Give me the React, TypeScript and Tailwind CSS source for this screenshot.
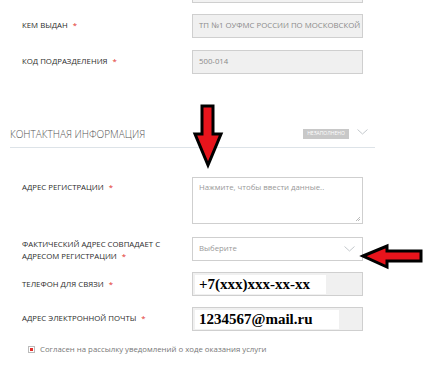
import React from "react";

const font = { fontFamily: '"Open Sans", "Noto Sans", sans-serif' };

function Label({ children }: { children: React.ReactNode }) {
  return (
    <div className="w-[170px] whitespace-nowrap pl-[22px] pr-2 text-[7.8px] uppercase leading-[12px] text-[#2b2b2b]">
      {children}
      <span className="ml-[5px] text-[#e2312d]">*</span>
    </div>
  );
}

function Arrows() {
  return (
    <svg className="pointer-events-none absolute left-0 top-0" width="426" height="381">
      <polygon
        points="202,106 213,106 213,134 221,134 208,165 195,134 202,134"
        fill="#e8141c"
        stroke="#000"
        strokeWidth="3"
        strokeLinejoin="miter"
      />
      <polygon
        points="363,256 387,246 387,251 421,251 421,261 387,261 387,267"
        fill="#e8141c"
        stroke="#000"
        strokeWidth="3"
        strokeLinejoin="miter"
      />
    </svg>
  );
}

function Chevron({ className }: { className?: string }) {
  return (
    <svg className={className} width="11" height="6" viewBox="0 0 11 6">
      <path d="M0.5 0.5 L5.5 5 L10.5 0.5" fill="none" stroke="#c4c8cc" strokeWidth="1" />
    </svg>
  );
}

export default function App() {
  return (
    <div className="relative h-[381px] w-[426px] overflow-hidden bg-white" style={font}>
      <div className="ml-[192px] h-[3px] w-[171px] border border-t-0 border-[#cfcfcf] bg-[#f2f2f2]" />

      <div className="mt-[11px] flex items-start">
        <div className="pt-[5px]">
          <Label>Кем выдан</Label>
        </div>
        <div className="ml-[22px] flex h-[24px] w-[171px] items-center overflow-hidden whitespace-nowrap border border-[#cfcfcf] bg-[#f0f0f0] pl-[6px] text-[7.8px] text-[#8a8a8a]">
          ТП №1 ОУФМС РОССИИ ПО МОСКОВСКОЙ
        </div>
      </div>

      <div className="mt-[12px] flex items-start">
        <div className="pt-[5px]">
          <Label>Код подразделения</Label>
        </div>
        <div className="ml-[22px] flex h-[24px] w-[171px] items-center border border-[#cfcfcf] bg-[#f0f0f0] pl-[6px] text-[7.8px] text-[#8a8a8a]">
          500-014
        </div>
      </div>

      <div className="ml-[10px] mt-[53px] w-[365px] border-b border-[#dde3e8] pb-[6px]">
        <div className="flex items-center">
          <div className="text-[10px] font-light uppercase leading-[14px] text-[#555]">
            Контактная информация
          </div>
          <div className="ml-auto mr-[26px] flex h-[10px] w-[46px] items-center justify-center bg-[#c8c8c8] text-[5px] uppercase text-white">
            незаполнено
          </div>
        </div>
      </div>
      <Chevron className="absolute left-[357px] top-[129px]" />

      <div className="mt-[29px] flex items-start">
        <div className="pt-[4px]">
          <Label>Адрес регистрации</Label>
        </div>
        <div className="relative ml-[22px] h-[47px] w-[171px] border border-[#cfcfcf] bg-white pl-[6px] pt-[4px] text-[7.8px] text-[#999]">
          Нажмите, чтобы ввести данные..
          <svg className="absolute bottom-[1px] right-[1px]" width="6" height="6">
            <path d="M5 1 L1 5 M5 3 L3 5" stroke="#aaa" strokeWidth="0.8" />
          </svg>
        </div>
      </div>

      <div className="mt-[13px] flex items-start">
        <div className="pt-[1px]">
          <Label>
            Фактический адрес совпадает с
            <br />
            адресом регистрации
          </Label>
        </div>
        <div className="ml-[22px] flex h-[24px] w-[171px] items-center border border-[#cfcfcf] bg-white pl-[6px] pr-[7px] text-[7.8px] text-[#999]">
          Выберите
          <Chevron className="ml-auto" />
        </div>
      </div>

      <div className="mt-[10px] flex items-start">
        <div className="pt-[6px]">
          <Label>Телефон для связи</Label>
        </div>
        <div className="ml-[22px] flex h-[24px] w-[171px] items-center border border-[#cfcfcf] bg-[#f0f0f0] pl-[2px]">
          <span
            className="flex h-[19px] w-[131px] items-center bg-white pl-[4px] text-[15px] font-bold text-black"
            style={{ fontFamily: '"Liberation Serif", serif' }}
          >
            +7(xxx)xxx-xx-xx
          </span>
        </div>
      </div>

      <div className="mt-[11px] flex items-start">
        <div className="pt-[5px]">
          <Label>Адрес электронной почты</Label>
        </div>
        <div className="ml-[22px] flex h-[24px] w-[171px] items-center border border-[#cfcfcf] bg-[#f0f0f0] pl-[2px]">
          <span
            className="flex h-[19px] w-[144px] items-center bg-white pl-[4px] text-[15px] font-bold text-black"
            style={{ fontFamily: '"Liberation Serif", serif' }}
          >
            1234567@mail.ru
          </span>
        </div>
      </div>

      <div className="ml-[28px] mt-[13px] flex items-center">
        <div className="flex h-[7px] w-[7px] items-center justify-center border border-[#bbb] bg-white">
          <div className="h-[3px] w-[3px] bg-[#e2312d]" />
        </div>
        <div className="ml-[5px] text-[7.8px] text-[#777]">
          Согласен на рассылку уведомлений о ходе оказания услуги
        </div>
      </div>

      <Arrows />
    </div>
  );
}
